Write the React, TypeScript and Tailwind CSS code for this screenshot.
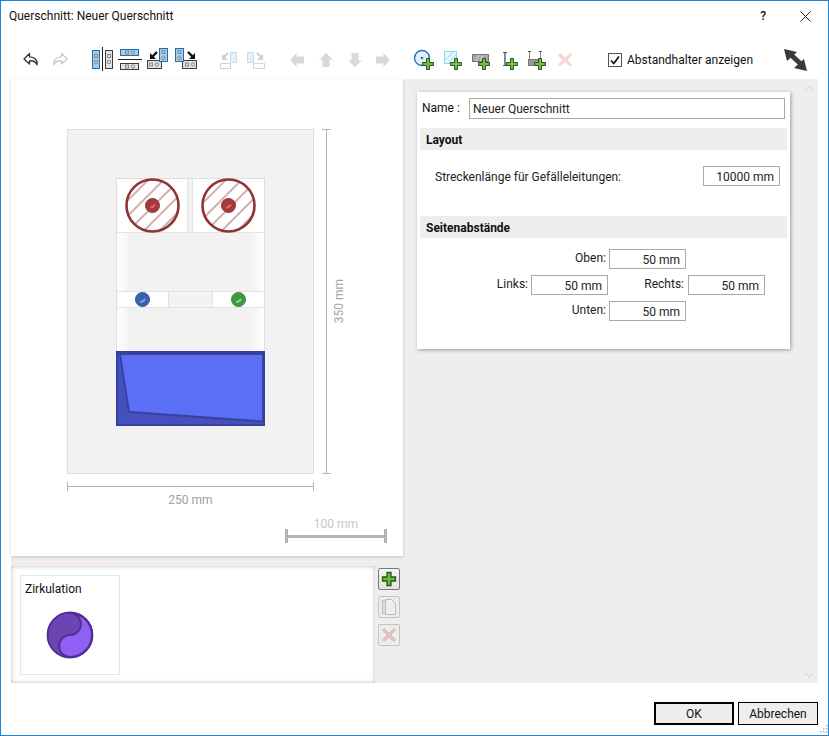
import React from "react";

function Plus({ x, y }: { x: number; y: number }) {
  return (
    <path
      transform={`translate(${x} ${y})`}
      d="M-1.500 -5.500h3v4h4v3h-4v4h-3v-4h-4v-3h4z"
      fill="#7cb84a"
      stroke="#1d5c14"
      strokeWidth="1"
    />
  );
}
function Ico({ w, ml, children, opacity }: { w: number; ml: number; children: React.ReactNode; opacity?: number }) {
  return (
    <svg width={w} height={30} viewBox={`0 0 ${w} 30`} className="shrink-0" style={{ marginLeft: ml, opacity }}>
      {children}
    </svg>
  );
}
const Blue = ({ x, y, w, h }: { x: number; y: number; w: number; h: number }) => (
  <rect x={x + 0.5} y={y + 0.5} width={w - 1} height={h - 1} fill="#a5cde8" stroke="#1c6fb8" />
);
const Gr = ({ x, y, w, h }: { x: number; y: number; w: number; h: number }) => (
  <rect x={x + 0.5} y={y + 0.5} width={w - 1} height={h - 1} fill="#e2e2e2" stroke="#3c3c3c" />
);
const Dots = ({ x, y, v }: { x: number; y: number; v?: boolean }) =>
  v ? (
    <g fill="none" stroke="#7e8a94">
      <rect x={x - 1.5} y={y - 4.5} width="3" height="3" />
      <circle cx={x} cy={y + 3} r="1.7" />
    </g>
  ) : (
    <g fill="none" stroke="#7e8a94">
      <rect x={x - 4.5} y={y - 1.5} width="3" height="3" />
      <circle cx={x + 3} cy={y} r="1.7" />
    </g>
  );

function Arrow({ dir }: { dir: "l" | "u" | "d" | "r" }) {
  const rot = { l: 180, u: 270, d: 90, r: 0 }[dir];
  return (
    <Ico w={14} ml={0}>
      <path transform={`rotate(${rot} 7 15)`} d="M0 11.500h7.500V8L14 15l-6.500 7v-3.500H0z" fill="#d9d9d9" />
    </Ico>
  );
}

const MoveLeft = (
  <>
    <Gr x={0} y={15} w={15} h={9} />
    <Dots x={7} y={19.5} />
    <Blue x={12} y={3} w={9} h={14} />
    <Dots x={16.5} y={10} v />
    <path d="M10 7 5 12" fill="none" stroke="#111" strokeWidth="2.400" />
    <path d="M3 8v6h6z" fill="#111" />
  </>
);
const MoveRight = (
  <>
    <Gr x={7} y={15} w={15} h={9} />
    <Dots x={15} y={19.5} />
    <Blue x={0} y={3} w={9} h={14} />
    <Dots x={4.5} y={10} v />
    <path d="M13 7l5 5" fill="none" stroke="#111" strokeWidth="2.400" />
    <path d="M20 8v6h-6z" fill="#111" />
  </>
);

function Toolbar() {
  return (
    <div className="mt-[15px] flex h-[30px] shrink-0 items-center pl-[21px]">
      <Ico w={18} ml={0}>
        <path d="M7.500 8.500 2 14l5.500 5v-3.200c3.500-.3 6 .5 7.500 4 .8-4.500-2-7.800-7.500-8z" fill="#fff" stroke="#333" strokeWidth="1.300" strokeLinejoin="round" />
      </Ico>
      <Ico w={18} ml={11} opacity={0.3}>
        <path d="M10.500 8.500 16 14l-5.500 5v-3.200c-3.500-.3-6 .5-7.500 4-.8-4.500 2-7.800 7.500-8z" fill="#fff" stroke="#555" strokeWidth="1.300" strokeLinejoin="round" />
      </Ico>
      <Ico w={22} ml={23}>
        <Blue x={0} y={5} w={8} h={19} />
        <Dots x={4} y={14} v />
        <path d="M10.500 2v24" stroke="#222" />
        <Gr x={13} y={5} w={8} h={19} />
        <Dots x={17} y={14} v />
      </Ico>
      <Ico w={24} ml={4}>
        <Blue x={2} y={4} w={19} h={7} />
        <Dots x={12} y={7.5} />
        <path d="M0 14.500h24" stroke="#222" />
        <Gr x={2} y={18} w={19} h={7} />
        <Dots x={12} y={21.5} />
      </Ico>
      <Ico w={22} ml={5}>{MoveLeft}</Ico>
      <Ico w={22} ml={6}>{MoveRight}</Ico>
      <Ico w={18} ml={23}>
        <rect x=".5" y="18.500" width="10" height="5" fill="#fff" stroke="#d4d4d4" />
        <rect x="10.500" y="7.500" width="6" height="10" fill="#e6f0f8" stroke="#c6dcee" />
        <path d="M8 8l-4 4" stroke="#cfcfcf" strokeWidth="2.200" />
        <path d="M2 9v6h6z" fill="#cfcfcf" />
      </Ico>
      <Ico w={18} ml={9}>
        <rect x="6.500" y="18.500" width="11" height="5" fill="#fff" stroke="#d4d4d4" />
        <rect x=".5" y="7.500" width="6" height="10" fill="#e6f0f8" stroke="#c6dcee" />
        <path d="M10 8l4 4" stroke="#cfcfcf" strokeWidth="2.200" />
        <path d="M16 9v6h-6z" fill="#cfcfcf" />
      </Ico>
      <div className="ml-[25px] flex">
        <Arrow dir="l" />
        <span className="w-[15px]" />
        <Arrow dir="u" />
        <span className="w-[15px]" />
        <Arrow dir="d" />
        <span className="w-[14px]" />
        <Arrow dir="r" />
      </div>
      <Ico w={22} ml={23}>
        <circle cx="9" cy="13" r="7.500" fill="#e4f1fb" stroke="#1c74c4" strokeWidth="1.400" />
        <circle cx="9" cy="13" r="1.300" fill="#1c74c4" />
        <Plus x={15} y={19} />
      </Ico>
      <Ico w={22} ml={5}>
        <rect x="4.500" y="6.500" width="12" height="12" fill="#e9f7fc" stroke="#8cd7ee" />
        <path d="M5 15 13 7M8 18l8-8" stroke="#8cd7ee" />
        <Plus x={16} y={19} />
      </Ico>
      <Ico w={22} ml={6}>
        <rect x="4.500" y="9.500" width="16" height="7" fill="#a8a8a8" stroke="#777" />
        <path d="M8 16l3-6M12 16l3-6" stroke="#ddd" />
        <Plus x={16} y={19} />
      </Ico>
      <Ico w={18} ml={11}>
        <path d="M4 8v12" stroke="#888" strokeWidth="2" />
        <path d="M2 7.500h4M2 20.500h4" stroke="#555" />
        <Plus x={11} y={19} />
      </Ico>
      <Ico w={22} ml={9}>
        <path d="M1.500 6v9M12.500 6v9" stroke="#888" />
        <path d="M0 6.500h3M11 6.500h3" stroke="#555" />
        <rect x="0.500" y="14.500" width="13" height="6" fill="#999" stroke="#777" />
        <Plus x={12} y={19} />
      </Ico>
      <Ico w={14} ml={8} opacity={0.2}>
        <path d="M2 8.500l5 4.500 5-4.500 1.500 1.500L9 15l4.500 4.500L12 21l-5-4.500L2 21 .5 19.500 5 15 .5 10z" fill="#d44" stroke="#b22" />
      </Ico>
      <div className="ml-[36px] flex items-center">
        <span className="flex h-[14px] w-[14px] items-center justify-center border border-[#555] bg-white">
          <svg width="12" height="12" viewBox="0 0 12 12">
            <path d="M2 6.500 4.800 9.500 10 2.500" fill="none" stroke="#111" strokeWidth="1.700" />
          </svg>
        </span>
        <span className="ml-[5px] w-[125px] whitespace-nowrap text-[12px] text-[#111]">Abstandhalter anzeigen</span>
      </div>
      <svg width="24" height="24" viewBox="0 0 24 24" className="ml-[32px] shrink-0">
        <path d="M5 5l14 13" stroke="#3a3a3a" strokeWidth="5" />
        <path d="M0 1 13 4 3 13zM23 23 10 20 20 11z" fill="#3a3a3a" />
      </svg>
    </div>
  );
}

function Drawing() {
  return (
    <svg width="392" height="477" viewBox="11 79 392 477" className="block" fontFamily="Roboto, sans-serif">
      <defs>
        <pattern id="hatch" width="11" height="11" patternUnits="userSpaceOnUse" patternTransform="rotate(45)">
          <rect width="11" height="11" fill="#fff" />
          <rect width="2" height="11" fill="#d2afaf" />
        </pattern>
        <linearGradient id="fadeL" x1="0" x2="1" y1="0" y2="0">
          <stop offset="0" stopColor="#fff" />
          <stop offset="1" stopColor="#f2f2f2" />
        </linearGradient>
        <linearGradient id="fadeR" x1="1" x2="0" y1="0" y2="0">
          <stop offset="0" stopColor="#fff" />
          <stop offset="1" stopColor="#f2f2f2" />
        </linearGradient>
        <linearGradient id="fadeT" x1="0" x2="0" y1="0" y2="1">
          <stop offset="0" stopColor="#f6f6f6" />
          <stop offset="0.5" stopColor="#f0f0f0" />
          <stop offset="1" stopColor="#f6f6f6" />
        </linearGradient>
      </defs>
      <rect x="67.500" y="129.500" width="246" height="344" fill="#f2f2f2" stroke="#dedede" />
      <rect x="116.500" y="178.500" width="148" height="173" fill="#f2f2f2" stroke="#dedede" />
      <rect x="117" y="179" width="70" height="53" fill="#fff" />
      <rect x="193" y="179" width="71" height="53" fill="#fff" />
      <path d="M187.500 179v53M192.500 179v53M117 232.500h147" stroke="#e4e4e4" fill="none" />
      {[152.5, 228.5].map((cx) => (
        <g key={cx}>
          <circle cx={cx} cy="205.500" r="26" fill="url(#hatch)" stroke="#8f3434" strokeWidth="2.600" />
          <circle cx={cx} cy="205.500" r="7" fill="#a63a3a" stroke="#8f3434" />
          <path d={`M${cx - 2} 207.500q2.500 0 4.500-3`} stroke="#f06a6a" strokeWidth="1.800" fill="none" />
        </g>
      ))}
      <rect x="117" y="233" width="13" height="58" fill="url(#fadeL)" />
      <rect x="251" y="233" width="13" height="58" fill="url(#fadeR)" />
      <rect x="117" y="308" width="13" height="43" fill="url(#fadeL)" />
      <rect x="251" y="308" width="13" height="43" fill="url(#fadeR)" />
      <rect x="117" y="292" width="51" height="15" fill="#fff" />
      <rect x="169" y="292" width="44" height="15" fill="url(#fadeT)" />
      <rect x="213" y="292" width="51" height="15" fill="#fff" />
      <path d="M117 291.500h147M117 307.500h147M168.500 292v15M212.500 292v15" stroke="#e2e2e2" fill="none" />
      <circle cx="142.500" cy="299.500" r="7" fill="#3a62ab" stroke="#35589c" />
      <path d="M140 302q3 0 5-3" stroke="#7aa5f5" strokeWidth="1.800" fill="none" />
      <circle cx="238.500" cy="299.500" r="7" fill="#3f9a3f" stroke="#388a38" />
      <path d="M236 302q3 0 5-3" stroke="#8ae08a" strokeWidth="1.800" fill="none" />
      <rect x="117" y="352" width="147" height="73" fill="#4450bb" stroke="#37409c" strokeWidth="2" />
      <path d="M120 354H263V421.500L129 412z" fill="#5a6ef6" stroke="#37409c" strokeWidth="1.800" />
      <g stroke="#b4b4b4" fill="none">
        <path d="M326.500 129v345M322 129.500h9M322 473.500h9" />
        <path d="M67.500 482v9M67 486.500h247M313.500 482v9" />
      </g>
      <text transform="translate(343 301) rotate(-90)" textAnchor="middle" fontSize="12" fill="#aaa59c">350 mm</text>
      <text x="190.500" y="504" textAnchor="middle" fontSize="12" fill="#a0a0a0">250 mm</text>
      <path d="M286.500 529v14M385.500 529v14" stroke="#b4b4b4" strokeWidth="3" />
      <path d="M287 536.500h98" stroke="#b4b4b4" strokeWidth="3" />
      <text x="336" y="528" textAnchor="middle" fontSize="12" fill="#c2c9d2">100 mm</text>
    </svg>
  );
}

function Field({ v }: { v: string }) {
  return (
    <div className="h-[20px] w-[77px] border border-[#a9a9a9] bg-white pr-[5px] text-right text-[12px] leading-[21px] text-[#222]">{v}</div>
  );
}

function Section({ title }: { title: string }) {
  return <div className="mx-[3px] h-[22px] bg-[#eeeeee] pl-[6px] text-[12px] font-bold leading-[24px] text-[#111]">{title}</div>;
}

function SmallBtn({ active, children }: { active?: boolean; children: React.ReactNode }) {
  return (
    <div className={`flex h-[22px] w-[22px] items-center justify-center rounded-[2px] border ${active ? "border-[#777] bg-gradient-to-b from-[#f6f6f6] to-[#e2e2e2]" : "border-[#c4c4c4] bg-[#ececec]"}`}>
      {children}
    </div>
  );
}

export default function App() {
  return (
    <div
      className="relative flex h-[736px] w-[829px] flex-col overflow-hidden border border-[#1a84d8] bg-white text-[12px] text-[#111]"
      style={{ fontFamily: "Roboto, 'Open Sans', sans-serif" }}
    >
      <div className="flex h-[29px] shrink-0 items-center pl-[8px] pt-[1px]">
        <span className="text-[12px]">Querschnitt: Neuer Querschnitt</span>
        <span className="ml-auto mr-[34px] text-[12px] font-medium">?</span>
        <svg width="11" height="11" viewBox="0 0 11 11" className="mr-[17px]">
          <path d="M.5.5l10 10M10.500.5l-10 10" stroke="#222" fill="none" />
        </svg>
      </div>
      <Toolbar />
      <div className="mx-[10px] mt-[4px] flex h-[604px] shrink-0 bg-[#eeeeee]">
        <div className="flex w-[392px] shrink-0 flex-col">
          <div className="h-[477px] bg-white shadow-[0_1px_3px_rgba(0,0,0,0.2)]">
            <Drawing />
          </div>
          <div className="mt-[10px] flex h-[117px]">
            <div className="h-full w-[364px] bg-white p-[9px] shadow-[inset_0_0_4px_rgba(0,0,0,0.28)]">
              <div className="flex h-[100px] w-[100px] flex-col items-center border border-[#cfeefb] bg-white">
                <div className="w-full pl-[4px] pt-[5px] text-[12px] leading-[16px]">Zirkulation</div>
                <svg width="48" height="48" viewBox="0 0 48 48" className="mt-[14px]">
                  <circle cx="24" cy="24" r="23" fill="#6c45b5" />
                  <path d="M24 2c6 0 11 5 11 11s-5 11-11 11-11 5-11 11 5 11 11 11c12 0 22-10 22-22S36 2 24 2z" fill="#9060f5" stroke="#533095" strokeWidth="2" />
                  <circle cx="24" cy="24" r="22.500" fill="none" stroke="#4f2f92" strokeWidth="1.800" />
                </svg>
              </div>
            </div>
            <div className="ml-[3px] mt-[2px] flex flex-col gap-[6px]">
              <SmallBtn active>
                <svg width="18" height="18" viewBox="0 0 18 18">
                  <path d="M7 2.500h4v4.500h4.500v4H11v4.500H7V11H2.500V7H7z" fill="#76b53f" stroke="#1e5f12" strokeWidth="1.300" />
                </svg>
              </SmallBtn>
              <SmallBtn>
                <svg width="14" height="16" viewBox="0 0 14 16">
                  <rect x=".5" y="1.500" width="9" height="13" fill="#e0e0e0" stroke="#bbb" />
                  <path d="M3.500.5h6l4 4v11h-10z" fill="#eee" stroke="#bbb" />
                </svg>
              </SmallBtn>
              <SmallBtn>
                <svg width="14" height="14" viewBox="0 0 14 14" opacity="0.25">
                  <path d="M2 .5l5 4.500 5-4.500 1.500 1.500L9 7l4.500 5L12 13.500 7 9l-5 4.500L.5 12 5 7 .5 2z" fill="#d44" stroke="#b22" />
                </svg>
              </SmallBtn>
            </div>
          </div>
        </div>
        <div className="relative flex-1 pl-[14px] pt-[13px]">
          <div className="h-[257px] w-[373px] bg-white shadow-[1px_1px_4px_rgba(0,0,0,0.35)]">
            <div className="flex h-[36px] items-start pt-[6px]">
              <span className="ml-[5px] w-[47px] text-[12px] leading-[21px]">Name :</span>
              <div className="h-[21px] w-[316px] border border-[#a9a9a9] pl-[3px] text-[12px] leading-[20px] text-[#222]">Neuer Querschnitt</div>
            </div>
            <Section title="Layout" />
            <div className="flex h-[66px] items-start pl-[18px] pr-[10px] pt-[16px]">
              <span className="text-[12px] leading-[22px] text-[#222]">Streckenlänge für Gefälleleitungen:</span>
              <div className="ml-auto"><Field v="10000 mm" /></div>
            </div>
            <Section title="Seitenabstände" />
            <div className="flex flex-col gap-[6px] pt-[11px]">
              <div className="flex leading-[18px]">
                <span className="mr-[3px] w-[189px] text-right text-[#222]">Oben:</span>
                <Field v="50 mm" />
              </div>
              <div className="flex leading-[18px]">
                <span className="mr-[3px] w-[111px] text-right text-[#222]">Links:</span>
                <Field v="50 mm" />
                <span className="mr-[4px] w-[76px] text-right text-[#222]">Rechts:</span>
                <Field v="50 mm" />
              </div>
              <div className="flex leading-[18px]">
                <span className="mr-[3px] w-[189px] text-right text-[#222]">Unten:</span>
                <Field v="50 mm" />
              </div>
            </div>
          </div>
          <svg width="10" height="6" viewBox="0 0 10 6" className="absolute right-[4px] top-[6px]">
            <path d="M1 5l4-4 4 4" fill="none" stroke="#d0d0d0" />
          </svg>
          <svg width="10" height="6" viewBox="0 0 10 6" className="absolute bottom-[5px] right-[4px]">
            <path d="M1 1l4 4 4-4" fill="none" stroke="#d0d0d0" />
          </svg>
        </div>
      </div>
      <div className="mr-[10px] mt-[19px] flex justify-end gap-[4px]">
        <div className="flex h-[23px] w-[80px] items-center justify-center border-2 border-black bg-[#eeeeee] text-[12px]">OK</div>
        <div className="flex h-[23px] w-[80px] items-center justify-center border border-black bg-[#eeeeee] text-[12px]">Abbrechen</div>
      </div>
      <svg width="11" height="11" viewBox="0 0 11 11" className="absolute bottom-0 right-0">
        <g fill="#b8b8b8">
          <rect x="9" y="1" width="1.500" height="1.500" />
          <rect x="6" y="4" width="1.500" height="1.500" />
          <rect x="9" y="4" width="1.500" height="1.500" />
          <rect x="3" y="7" width="1.500" height="1.500" />
          <rect x="6" y="7" width="1.500" height="1.500" />
          <rect x="9" y="7" width="1.500" height="1.500" />
        </g>
      </svg>
    </div>
  );
}
